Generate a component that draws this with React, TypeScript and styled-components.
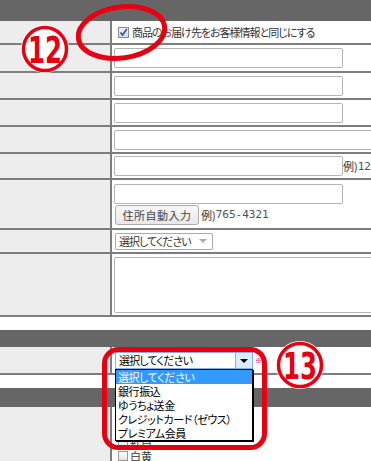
import React from "react";
import styled, { createGlobalStyle } from "styled-components";

const GlobalStyle = createGlobalStyle`
  html, body {
    margin: 0;
    padding: 0;
    background: #fff;
  }
  body {
    font-family: "Noto Sans CJK JP", "Liberation Sans", sans-serif;
  }
`;

const RED = "#e60012";
const LINE = "#7d7d7d";

const Page = styled.div`
  position: relative;
  width: 371px;
  height: 461px;
  overflow: hidden;
  background: #fff;
  font-size: 11px;
  font-feature-settings: "palt";
  color: #333;
  display: flex;
  flex-direction: column;
`;

const SectionBar = styled.div<{ $h: number }>`
  flex: none;
  height: ${p => p.$h}px;
  background: #666;
`;

const Gap = styled.div`
  flex: none;
  height: 13px;
`;

const Row = styled.div<{ $h?: number }>`
  flex: ${p => (p.$h ? "none" : "1")};
  width: 440px;
  display: grid;
  grid-template-columns: 112px 1fr;
  height: ${p => (p.$h ? `${p.$h}px` : "auto")};
  box-sizing: border-box;
  border-bottom: ${p => (p.$h ? `2px solid ${LINE}` : "none")};
`;

const Label = styled.div`
  background: #ededed;
  border-right: 2px solid ${LINE};
  box-sizing: border-box;
`;

const Cell = styled.div<{ $pl?: number; $top?: boolean }>`
  display: flex;
  flex-direction: column;
  justify-content: ${p => (p.$top ? "flex-start" : "center")};
  align-items: flex-start;
  gap: 1px;
  padding-left: ${p => p.$pl ?? 2}px;
  min-width: 0;
  background: #fff;
`;

const Inline = styled.div`
  display: flex;
  align-items: center;
  white-space: nowrap;
`;

const CheckLine = styled.label`
  display: flex;
  align-items: center;
  gap: 3px;
  white-space: nowrap;
  color: #333;
  font-size: 11px;
  letter-spacing: -1px;
`;

const BigCheck = styled.span`
  width: 11px;
  height: 11px;
  box-sizing: border-box;
  border: 1px solid #8a8a8a;
  background: linear-gradient(#eef0f4, #d8dbe2);
  display: flex;
  align-items: center;
  justify-content: center;
`;

const TextInput = styled.input<{ $w: number }>`
  width: ${p => p.$w}px;
  height: 20px;
  box-sizing: border-box;
  margin: 0;
  padding: 0 4px;
  border: 1px solid #b4b4b4;
  border-radius: 2px;
  background: #fff;
  font: inherit;
  outline: none;
`;

const TextArea = styled.textarea`
  width: 300px;
  height: 56px;
  box-sizing: border-box;
  margin: 0;
  padding: 2px 4px;
  border: 1px solid #b4b4b4;
  border-radius: 2px;
  resize: none;
  font: inherit;
  outline: none;
`;

const AutoButton = styled.button`
  margin: 0 0 0 1px;
  width: 84px;
  height: 20px;
  box-sizing: border-box;
  padding: 0;
  border: 1px solid #acacac;
  border-radius: 3px;
  background: linear-gradient(#f7f7f7, #e8e8e8);
  font-family: inherit;
  font-size: 11px;
  letter-spacing: 0.5px;
  color: #444;
`;

const Example = styled.span<{ $ml?: number }>`
  margin-left: ${p => p.$ml ?? 0}px;
  color: #333;
  font-size: 11px;
`;

const Digits = styled.span`
  font-family: "DejaVu Sans Mono", "Liberation Mono", monospace;
  font-size: 11px;
  color: #4a5262;
`;

const PlainSelect = styled.div`
  margin-left: 1px;
  width: 98px;
  height: 17px;
  box-sizing: border-box;
  border: 1px solid #aaa;
  border-radius: 2px;
  display: flex;
  align-items: center;
  justify-content: space-between;
  padding: 0 5px 0 3px;
  color: #333;
  font-size: 11px;
  letter-spacing: -1px;
  white-space: nowrap;
`;

const Caret = styled.span<{ $color: string }>`
  width: 0;
  height: 0;
  border-left: 4px solid transparent;
  border-right: 4px solid transparent;
  border-top: 4px solid ${p => p.$color};
`;

const SelectWrap = styled.div`
  position: relative;
  margin: 5px 0 0 1px;
  display: flex;
  align-items: center;
`;

const FocusSelect = styled.div`
  width: 138px;
  height: 17px;
  box-sizing: border-box;
  border: 1px solid #7eb4ea;
  display: flex;
  align-items: stretch;
  background: #fff;
`;

const SelectText = styled.span`
  flex: 1;
  padding-left: 3px;
  line-height: 15px;
  font-size: 11px;
  letter-spacing: -0.8px;
  color: #000;
  white-space: nowrap;
`;

const ArrowBox = styled.span`
  width: 16px;
  background: #dcecfc;
  border-left: 1px solid #7eb4ea;
  display: flex;
  align-items: center;
  justify-content: center;
`;

const Required = styled.span`
  color: ${RED};
  font-size: 7px;
  margin-left: 2px;
  line-height: 1;
`;

const Dropdown = styled.ul`
  position: absolute;
  top: 17px;
  left: 0;
  width: 138px;
  margin: 0;
  padding: 0;
  list-style: none;
  background: #fff;
  border: 1px solid #000;
  box-shadow: 1px 1px 0 #000;
  box-sizing: border-box;
  z-index: 2;
`;

const Option = styled.li<{ $active?: boolean }>`
  height: 14px;
  line-height: 14px;
  padding-left: 2px;
  font-size: 11px;
  letter-spacing: -0.4px;
  background: ${p => (p.$active ? "#3399ff" : "transparent")};
  color: ${p => (p.$active ? "#fff" : "#000")};
  white-space: nowrap;
  overflow: hidden;
`;

const CheckList = styled.div`
  display: flex;
  flex-direction: column;
  padding: 3px 0 0 6px;
`;

const CheckItem = styled.label`
  display: flex;
  align-items: center;
  gap: 2px;
  height: 13px;
  font-size: 11px;
  color: #333;
`;

const SmallBox = styled.span`
  width: 10px;
  height: 10px;
  box-sizing: border-box;
  border: 1px solid #999;
  background: linear-gradient(#fff, #e4e4e4);
`;

const Overlay = styled.svg`
  position: absolute;
  left: 0;
  top: 0;
  width: 371px;
  height: 461px;
  pointer-events: none;
  z-index: 5;
`;

function CircleNum({ cx, cy, n }: { cx: number; cy: number; n: string }) {
  return (
    <g>
      <circle cx={cx} cy={cy} r={24} fill="#fff" />
      <circle cx={cx} cy={cy} r={21.5} fill="#fff" stroke={RED} strokeWidth={3.5} />
      <text
        x={cx}
        y={cy + 13.5}
        textAnchor="middle"
        fontFamily="'DejaVu Sans', 'Liberation Sans', sans-serif"
        fontWeight="bold"
        fontSize={38}
        textLength={34}
        lengthAdjust="spacingAndGlyphs"
        fill={RED}
      >
        {n}
      </text>
    </g>
  );
}

const payments = ["選択してください", "銀行振込", "ゆうちょ送金", "クレジットカード（ゼウス）", "プレミアム会員"];
const noshi = ["なし", "寿", "紅白", "白黄"];

export default function App() {
  return (
    <Page>
      <GlobalStyle />
      <SectionBar $h={21} />

      <Row $h={24}>
        <Label />
        <Cell $pl={6}>
          <CheckLine>
            <BigCheck>
              <svg width="9" height="9" viewBox="0 0 9 9">
                <path d="M1.5 4.5 L3.6 7 L7.8 1" fill="none" stroke="#2c4da6" strokeWidth="1.6" />
              </svg>
            </BigCheck>
            商品のお届け先をお客様情報と同じにする
          </CheckLine>
        </Cell>
      </Row>
      <Row $h={28}>
        <Label />
        <Cell>
          <TextInput $w={229} readOnly />
        </Cell>
      </Row>
      <Row $h={27}>
        <Label />
        <Cell>
          <TextInput $w={229} readOnly />
        </Cell>
      </Row>
      <Row $h={27}>
        <Label />
        <Cell>
          <TextInput $w={229} readOnly />
        </Cell>
      </Row>
      <Row $h={27}>
        <Label />
        <Cell>
          <TextInput $w={300} readOnly />
        </Cell>
      </Row>
      <Row $h={26}>
        <Label />
        <Cell>
          <Inline>
            <TextInput $w={229} readOnly />
            <Example>例)</Example>
            <Digits>12</Digits>
          </Inline>
        </Cell>
      </Row>
      <Row $h={50}>
        <Label />
        <Cell>
          <TextInput $w={229} readOnly />
          <Inline>
            <AutoButton>住所自動入力</AutoButton>
            <Example $ml={2}>例)</Example>
            <Digits>765-4321</Digits>
          </Inline>
        </Cell>
      </Row>
      <Row $h={24}>
        <Label />
        <Cell>
          <PlainSelect>
            選択してください
            <Caret $color="#aaa" />
          </PlainSelect>
        </Cell>
      </Row>
      <Row $h={63}>
        <Label />
        <Cell>
          <TextArea readOnly />
        </Cell>
      </Row>

      <Gap />
      <SectionBar $h={17} />
      <Row $h={28}>
        <Label />
        <Cell $top>
          <SelectWrap>
            <FocusSelect>
              <SelectText>選択してください</SelectText>
              <ArrowBox>
                <Caret $color="#000" />
              </ArrowBox>
            </FocusSelect>
            <Required>※</Required>
            <Dropdown>
              {payments.map((p, i) => (
                <Option key={p} $active={i === 0}>
                  {p}
                </Option>
              ))}
            </Dropdown>
          </SelectWrap>
        </Cell>
      </Row>

      <Gap />
      <SectionBar $h={19} />
      <Row>
        <Label />
        <Cell $top $pl={0}>
          <CheckList>
            {noshi.map(n => (
              <CheckItem key={n}>
                <SmallBox />
                {n}
              </CheckItem>
            ))}
          </CheckList>
        </Cell>
      </Row>

      <Overlay viewBox="0 0 371 461">
        <ellipse
          cx={121.5}
          cy={32.5}
          rx={43.5}
          ry={25.5}
          transform="rotate(-8 121.5 32.5)"
          fill="none"
          stroke={RED}
          strokeWidth={5}
        />
        <CircleNum cx={45} cy={49} n="12" />
        <CircleNum cx={300} cy={365} n="13" />
        <rect x={104.5} y={349.5} width={160} height={98} rx={14} fill="none" stroke={RED} strokeWidth={5} />
      </Overlay>
    </Page>
  );
}
